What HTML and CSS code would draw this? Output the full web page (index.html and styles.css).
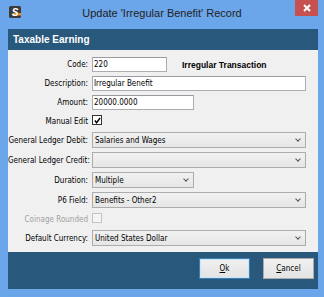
FILE: index.html
```html
<!DOCTYPE html>
<html lang="en">

<head>
    <meta charset="UTF-8">
    <title>Update 'Irregular Benefit' Record</title>
    <link rel="stylesheet" href="styles.css">
</head>

<body>
    <div class="window">
        <div class="titlebar">
            <svg class="app-icon" width="12" height="12" viewBox="0 0 12 12">
                <rect x="0" y="0" width="12" height="12" rx="1.5" fill="#3b3b3b" />
                <rect x="4" y="7" width="8" height="2.5" fill="#f08a1c" />
                <text x="6" y="9.6" font-family="Liberation Sans, sans-serif" font-size="10" font-weight="bold" font-style="italic" fill="#fff" text-anchor="middle">S</text>
            </svg>
            <div class="title">Update 'Irregular Benefit' Record</div>
            <div class="btn-close">
                <svg width="8" height="8" viewBox="0 0 8 8">
                    <path d="M1 1 L7 7 M7 1 L1 7" stroke="#fff" stroke-width="2" />
                </svg>
            </div>
        </div>

        <div class="panel">
            <div class="panel-head">Taxable Earning</div>

            <div class="form">
                <label class="lbl">Code:</label>
                <div class="ctl">
                    <input class="txt w-code" type="text" value="220">
                    <span class="note">Irregular Transaction</span>
                </div>

                <label class="lbl">Description:</label>
                <div class="ctl">
                    <input class="txt w-full" type="text" value="Irregular Benefit">
                </div>

                <label class="lbl">Amount:</label>
                <div class="ctl">
                    <input class="txt w-half" type="text" value="20000.0000">
                </div>

                <label class="lbl">Manual Edit</label>
                <div class="ctl top">
                    <span class="chk">
                        <svg width="7" height="7" viewBox="0 0 8 8">
                            <path d="M1 4 L3 6.5 L7 1" stroke="#000" stroke-width="1.7" fill="none" />
                        </svg>
                    </span>
                </div>

                <label class="lbl">General Ledger Debit:</label>
                <div class="ctl">
                    <div class="combo w-full"><span>Salaries and Wages</span><i class="arrow"></i></div>
                </div>

                <label class="lbl">General Ledger Credit:</label>
                <div class="ctl">
                    <div class="combo w-full"><span></span><i class="arrow"></i></div>
                </div>

                <label class="lbl">Duration:</label>
                <div class="ctl">
                    <div class="combo w-half"><span>Multiple</span><i class="arrow"></i></div>
                </div>

                <label class="lbl">P6 Field:</label>
                <div class="ctl">
                    <div class="combo w-full"><span>Benefits - Other2</span><i class="arrow"></i></div>
                </div>

                <label class="lbl disabled">Coinage Rounded</label>
                <div class="ctl top">
                    <span class="chk off"></span>
                </div>

                <label class="lbl">Default Currency:</label>
                <div class="ctl">
                    <div class="combo w-full"><span>United States Dollar</span><i class="arrow"></i></div>
                </div>
            </div>

            <div class="footer">
                <button class="btn default"><u>O</u>k</button>
                <button class="btn"><u>C</u>ancel</button>
            </div>
        </div>
    </div>
</body>

</html>
```

FILE: styles.css
```css
* {
    margin: 0;
    padding: 0;
    box-sizing: border-box;
}

body {
    font-family: "DejaVu Sans Condensed", "DejaVu Sans", "Liberation Sans", sans-serif;
    font-stretch: condensed;
    font-size: 8px;
    color: #000;
    background: #6ba6ea;
}

.window {
    width: 324px;
    height: 297px;
    background: #6ba6ea;
    display: flex;
    flex-direction: column;
}

/* title bar */
.titlebar {
    height: 29px;
    display: grid;
    grid-template-columns: 1fr auto 1fr;
    align-items: start;
}

.app-icon {
    margin: 6px 0 0 9px;
}

.title {
    font-family: "Liberation Sans", Arial, sans-serif;
    font-stretch: normal;
    font-size: 11px;
    line-height: 12px;
    margin-top: 7px;
    color: #222;
}

.btn-close {
    justify-self: end;
    width: 23px;
    height: 16px;
    margin-right: 6px;
    background: #c75050;
    display: flex;
    align-items: center;
    justify-content: center;
}

/* panel */
.panel {
    flex: 1;
    margin: 0 6px 8px 8px;
    background: #28597d;
    display: flex;
    flex-direction: column;
}

.panel-head {
    height: 21px;
    line-height: 21px;
    padding-left: 5px;
    color: #fff;
    font-family: "Liberation Sans", Arial, sans-serif;
    font-stretch: normal;
    font-size: 10px;
    font-weight: bold;
}

.form {
    height: 202px;
    background: #f0f0f0;
    padding-top: 7px;
    display: grid;
    grid-template-columns: 80px 1fr;
    grid-template-rows: 15px 15px 15px 14px 16px 16px 16px 16px 14px 16px;
    column-gap: 4px;
    row-gap: 4px;
}

.lbl {
    text-align: right;
    align-self: center;
    white-space: nowrap;
    color: #000;
}

.lbl.disabled {
    color: #a0a0a0;
}

.ctl {
    display: flex;
    align-items: center;
}

.ctl.top {
    align-items: flex-start;
    padding-top: 1px;
}

.w-code {
    width: 75px;
}

.w-half {
    width: 102px;
}

.w-full {
    width: 214px;
}

.txt {
    height: 15px;
    border: 1px solid #abadb3;
    border-top-color: #9a9ca4;
    background: #fff;
    font-family: inherit;
    font-stretch: inherit;
    font-size: 8px;
    padding: 0 1px;
    color: #000;
    outline: none;
}

.note {
    margin-left: 15px;
    font-family: "Liberation Sans", Arial, sans-serif;
    font-stretch: normal;
    font-size: 8.5px;
    font-weight: bold;
}

.chk {
    width: 10px;
    height: 10px;
    border: 1px solid #333;
    background: #fff;
    display: flex;
    align-items: center;
    justify-content: center;
}

.chk.off {
    border-color: #c4c4c4;
    background: #f4f4f4;
}

.combo {
    height: 16px;
    border: 1px solid #acacac;
    background: linear-gradient(#f1f1f1, #e6e6e6);
    display: flex;
    align-items: center;
    justify-content: space-between;
    padding: 0 5px 0 2px;
}

.arrow {
    width: 4px;
    height: 4px;
    border-right: 1.3px solid #555;
    border-bottom: 1.3px solid #555;
    transform: rotate(45deg);
    margin-top: -2px;
}

/* footer */
.footer {
    flex: 1;
    display: flex;
    justify-content: flex-end;
    align-items: flex-start;
    gap: 13px;
    padding: 6px 4px 0 0;
}

.btn {
    width: 51px;
    height: 21px;
    border: 1px solid #acacac;
    background: linear-gradient(#f0f0f0, #e3e3e3);
    font-family: inherit;
    font-stretch: inherit;
    font-size: 8px;
    color: #000;
}

.btn.default {
    border-color: #3c7fb1;
    box-shadow: inset 0 0 0 1px #cbe4f7;
}
```
